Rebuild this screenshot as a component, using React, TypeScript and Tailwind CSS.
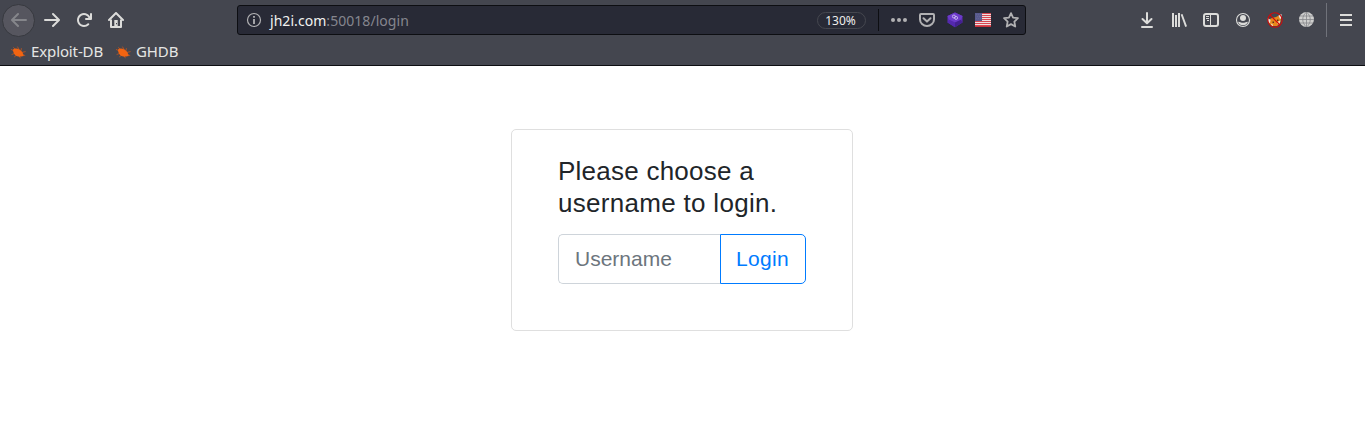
import type { ReactNode } from "react";

function Icon({ children, className = "" }: { children: ReactNode; className?: string }) {
  return (
    <svg
      viewBox="0 0 16 16"
      fill="currentColor"
      className={`h-4 w-4 shrink-0 ${className}`}
    >
      {children}
    </svg>
  );
}

const ARROW =
  "M15 7H3.414l4.293-4.293a1 1 0 0 0-1.414-1.414l-6 6a1 1 0 0 0 0 1.414l6 6a1 1 0 0 0 1.414-1.414L3.414 9H15a1 1 0 0 0 0-2z";

function Bug() {
  return (
    <svg viewBox="0 0 16 16" className="h-4 w-4 shrink-0">
      <path
        d="M3.200 3.400 5.600 5.400M1 5.400l3 1.400M1.600 10.600l3.800-1.600M4.200 13l3-2.400M7.400 2.600l1.800 3M11.400 4.200l-.4 2.600M12 8.400l3.600-.8M12.600 10.600l2.600 1M9 11.400l1.400 2.800"
        stroke="#b65322"
        strokeWidth=".9"
        fill="none"
      />
      <path
        d="M3 5.600C4.600 4.200 7.200 4.400 9.400 5.600c2 1.200 3.200 2.800 3.600 4.200l.8 2.200-2.800.6c-2 .4-4.400-.2-6-1.600C3.800 9.600 3 8 3 5.600z"
        fill="#f26411"
      />
    </svg>
  );
}

function Flag() {
  return (
    <svg viewBox="0 0 16 14" className="h-[14px] w-4 shrink-0" shapeRendering="crispEdges">
      <path fill="#eedfe1" d="M0 0h16v14H0z" />
      <path fill="#d84650" d="M0 0h16v1H0zM0 2h16v1H0zM0 4h16v1H0zM0 6h16v1H0zM0 8h16v1H0zM0 10h16v1H0zM0 12h16v1H0z" />
      <path fill="#c7323d" d="M0 13h16v1H0z" />
      <path fill="#585a8e" d="M0 0h7v8H0z" />
      <path fill="#626492" d="M1 1h1v1H1zM3 1h1v1H3zM5 1h1v1H5zM2 3h1v1H2zM4 3h1v1H4zM1 5h1v1H1zM3 5h1v1H3zM5 5h1v1H5z" />
    </svg>
  );
}

function NavButtons() {
  return (
    <div className="flex items-center text-[#dcdcda]">
      <div className="ml-[2px] flex h-[33px] w-[33px] items-center justify-center rounded-full border border-[#37393f] bg-[#56565f] text-[#85868b]">
        <Icon><path d={ARROW} /></Icon>
      </div>
      <Icon className="ml-[9px]"><path d={ARROW} transform="matrix(-1 0 0 1 16 0)" /></Icon>
      <Icon className="ml-4">
        <path d="M15 1a1 1 0 0 0-1 1v2.418A6.995 6.995 0 1 0 8 15a6.954 6.954 0 0 0 4.950-2.050 1 1 0 0 0-1.414-1.414A5.019 5.019 0 1 1 12.549 6H10a1 1 0 0 0 0 2h5a1 1 0 0 0 1-1V2a1 1 0 0 0-1-1z" />
      </Icon>
      <Icon className="ml-4">
        <path d="M1 8 8 1l7 7" fill="none" stroke="currentColor" strokeWidth="2" strokeLinecap="round" strokeLinejoin="round" />
        <path d="M3 7.500V15h10V7.500" fill="none" stroke="currentColor" strokeWidth="2" strokeLinejoin="round" />
        <path d="M6.300 8h3.400v7H6.300z" />
        <path d="M8 11h1v1.200H8z" fill="#44464f" />
      </Icon>
    </div>
  );
}

function UrlBar() {
  return (
    <div className="ml-[113px] flex h-[30px] w-[789px] items-center rounded-[3px] border border-[#0d0e12] bg-[#282a36] text-[#b1b1b3]">
      <Icon className="ml-2">
        <circle cx="8" cy="8" r="6.500" fill="none" stroke="currentColor" strokeWidth="1.200" />
        <path d="M7.100 7h1.800v5H7.100zM7.100 4h1.800v1.800H7.100z" />
      </Icon>
      <div className="ml-2 w-[547px] whitespace-nowrap pt-[2px] text-[14px] leading-5 tracking-[0.05px] text-[#85868e]">
        <span className="text-[#f2f2f0]">jh2i.com</span>:50018/login
      </div>
      <div className="flex h-[17px] w-[49px] items-center justify-center rounded-full border border-[#45474f] pr-[2px] pt-px text-[12px] leading-none text-[#eeeeec]">
        130%
      </div>
      <div className="ml-3 h-[22px] w-px bg-[#0d0e12]" />
      <Icon className="ml-3">
        <circle cx="2" cy="8" r="2" /><circle cx="8" cy="8" r="2" /><circle cx="14" cy="8" r="2" />
      </Icon>
      <Icon className="ml-3">
        <path d="M2 2h12a1 1 0 0 1 1 1v4.500a7 6.500 0 0 1-14 0V3a1 1 0 0 1 1-1z" fill="none" stroke="currentColor" strokeWidth="2" />
        <path d="m4.500 6.300 3.500 3.300 3.500-3.300" fill="none" stroke="currentColor" strokeWidth="2" strokeLinecap="round" strokeLinejoin="round" />
      </Icon>
      <Icon className="ml-3">
        <path d="M8 .4 15.500 4v6.500L8 15.200.5 10.500V4z" fill="#5c2bb8" />
        <path d="M8 .4 15.500 4 14 7.800 8 10.500 2 7.800.5 4z" fill="#6c3bc9" />
        <path d="M.5 10.500 2 7.800l6 2.700v4.700z" fill="#5329ad" />
        <path d="M15.500 10.500 14 7.800l-6 2.700v4.700z" fill="#43208f" />
        <circle cx="6.900" cy="4.500" r="1.500" fill="none" stroke="#cdbcf2" strokeWidth=".9" />
        <circle cx="9.100" cy="5.900" r="1.500" fill="none" stroke="#cdbcf2" strokeWidth=".9" />
      </Icon>
      <div className="ml-3 flex"><Flag /></div>
      <Icon className="ml-3">
        <path d="m8 1.100 2.050 4.500 4.900.6-3.600 3.400.9 4.900L8 12.100l-4.250 2.400.9-4.900-3.600-3.400 4.900-.6z" fill="none" stroke="currentColor" strokeWidth="1.800" strokeLinejoin="round" />
      </Icon>
    </div>
  );
}

function Tools() {
  return (
    <div className="ml-auto flex items-center gap-4 text-[#dcdcda]">
      <Icon>
        <path d="M8 1v10M3.500 7 8 11.300 12.500 7M3 15h10" fill="none" stroke="currentColor" strokeWidth="2" strokeLinecap="round" strokeLinejoin="round" />
      </Icon>
      <Icon>
        <path d="M1 1h2v14H1zM4 3h2v12H4zM7 1h2v14H7zM9.700 2.500l1.800-.6L16 14.200l-1.800.7z" />
      </Icon>
      <Icon>
        <rect x="1" y="2" width="14" height="12" rx="2" fill="none" stroke="currentColor" strokeWidth="2" />
        <path d="M7 2h1v12H7zM3 4h3v1H3zM3 6h3v1H3zM4 8h2v1H4z" />
      </Icon>
      <Icon>
        <circle cx="8" cy="8" r="6.500" fill="none" stroke="currentColor" strokeWidth="1.100" />
        <circle cx="8" cy="6" r="3" />
        <path d="M3 9.700c1.300 0 2.300.2 3 .7.900.6 3.100.6 4 0 .7-.5 1.700-.7 3-.7a5.300 5.300 0 0 1-10 0z" />
      </Icon>
      <Icon>
        <path d="M2 7.500 5 6l4-1 3-1.500 2 3-1 5L10 14H5L2 11z" fill="#e9871b" />
        <path d="M11.500 3.500 14.500 2v4l-1.500 1zM.8 6 3.500 8 3 11l-1.700-1z" fill="#ece8df" />
        <path d="m3.500 11.500 2 .5.500 2H5zM11 9.500l2.500-1-1 3.500H10z" fill="#f4ddb1" />
        <path d="M5.500 9.500H7V11H5.500zM10 7.500h1.500V9H10z" fill="#5a341c" />
        <circle cx="8" cy="8" r="7.200" fill="none" stroke="#d30909" strokeWidth="1.100" />
        <path d="m3 3 10 10" stroke="#d30909" strokeWidth="1.100" />
      </Icon>
      <Icon>
        <circle cx="7.500" cy="7.500" r="7.500" fill="#cfcfce" />
        <path d="M7.500 0v15M1 4h13M0 7.500h15M1 11h13M7.500 0C2.500 4 2.500 11 7.500 15M7.500 0c5 4 5 11 0 15" fill="none" stroke="#85868a" strokeWidth=".8" />
      </Icon>
      <div className="-ml-[5px] flex h-[34px] items-center border-l border-[#70727a] pl-[11px] pr-[11px]">
        <Icon>
          <path d="M2 2h12v2H2zM2 7h12v2H2zM2 12h12v2H2z" />
        </Icon>
      </div>
    </div>
  );
}

function Bookmark({ label, className }: { label: string; className: string }) {
  return (
    <div className="flex items-center">
      <Bug />
      <span className={`mb-[2px] ml-[5px] whitespace-nowrap text-[15px] leading-5 ${className}`}>{label}</span>
    </div>
  );
}

export default function App() {
  return (
    <div className="flex h-[428px] w-[1365px] flex-col overflow-hidden bg-white font-['Noto_Sans',sans-serif]">
      <header className="flex h-[66px] shrink-0 flex-col border-b border-[#0d0e12] bg-[#44464f]">
        <div className="flex h-10 shrink-0 items-center">
          <NavButtons />
          <UrlBar />
          <Tools />
        </div>
        <nav className="flex h-6 items-center gap-3 pl-[10px] text-[#e6e6e4]">
          <Bookmark label="Exploit-DB" className="w-[72px] tracking-[-0.12px]" />
          <Bookmark label="GHDB" className="tracking-[-0.1px]" />
        </nav>
      </header>
      <main className="flex justify-center pt-[63px] font-['Liberation_Sans',Arial,sans-serif]">
        <form
          className="mr-px h-[202px] w-[342px] rounded-[5px] border border-[#dfdfdf] px-[46px] pt-[25px]"
          onSubmit={(e) => e.preventDefault()}
        >
          <h1 className="whitespace-nowrap text-[26px] leading-8 text-[#212529]">
            <span className="tracking-[0.24px]">Please choose a</span>
            <br />
            <span className="tracking-[0.3px]">username to login.</span>
          </h1>
          <div className="mt-[15px] flex h-[50px]">
            <input
              aria-label="Username"
              placeholder="Username"
              className="w-[162px] rounded-l-[5px] border border-r-0 border-[#ced4da] pl-4 text-[21px] text-[#495057] outline-none placeholder:text-[#6c757d]"
            />
            <button className="w-[86px] rounded-r-[5px] border border-[#007bff] pr-[1px] text-[21px] tracking-[0.3px] text-[#007bff]">
              Login
            </button>
          </div>
        </form>
      </main>
    </div>
  );
}
